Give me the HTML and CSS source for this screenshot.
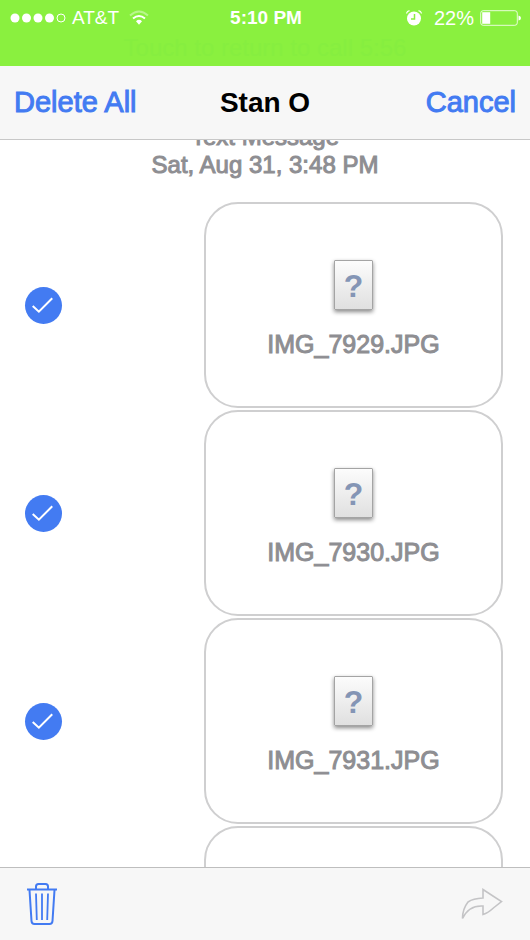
FILE: index.html
```html
<!DOCTYPE html>
<html lang="en">
<head>
<meta charset="utf-8">
<meta name="viewport" content="width=device-width, initial-scale=1">
<title>Stan O</title>
<link rel="stylesheet" href="styles.css">
</head>
<body>
<header class="status">
  <div class="status-row">
    <div class="status-left">
      <svg class="signal" width="56" height="10" viewBox="0 0 56 10" aria-hidden="true"><g fill="#fff"><circle cx="5" cy="5" r="4.5"/><circle cx="16.5" cy="5" r="4.5"/><circle cx="28" cy="5" r="4.5"/><circle cx="39.500" cy="5" r="4.500"/></g><circle cx="51" cy="5" r="4" fill="none" stroke="#fff"/></svg>
      <span>AT&amp;T</span>
      <svg class="wifi" width="20" height="16" viewBox="0 0 20 16" fill="none" stroke="#fff" stroke-width="2" aria-hidden="true"><path d="M1 5.500Q10-2.500 19 5.500" opacity=".4"/><path d="M4 8.500Q10 3.500 16 8.500"/><path d="M7 11.200Q10 8.500 13 11.200L10 14.800Z" fill="#fff" stroke="none"/></svg>
    </div>
    <span class="clock">5:10 PM</span>
    <div class="status-right">
      <svg width="16" height="16" viewBox="0 0 16 16" aria-hidden="true"><circle cx="8" cy="8.500" r="7" fill="#fff"/><path d="M.5 3.500Q1 1 3.500.7M12.500.7Q15 1 15.500 3.500" fill="none" stroke="#fff" stroke-width="1.200"/><path d="M8.500 4v5H5" fill="none" stroke="#8af03f" stroke-width="1.500"/></svg>
      <span>22%</span>
      <svg width="42" height="16" viewBox="0 0 42 16" aria-hidden="true"><rect x=".7" y=".7" width="36.600" height="14.600" rx="2.500" fill="none" stroke="#fff" opacity=".8"/><rect x="2.200" y="2.200" width="8" height="11.600" fill="#fff"/><path d="M38.500 5.500q2.500.5 2.500 2.500t-2.500 2.500z" fill="#fff"/></svg>
    </div>
  </div>
  <div class="call">Touch to return to call 5:56</div>
</header>
<nav class="bar">
  <button class="action" type="button">Delete All</button>
  <h1>Stan O</h1>
  <button class="action end" type="button">Cancel</button>
</nav>
<main class="thread">
  <p class="stamp">Text Message<br>Sat, Aug 31, 3:48 PM</p>
  <label class="message">
    <span class="tick"><input type="checkbox" checked><svg viewBox="0 0 36 36" aria-hidden="true"><path d="M7.500 18.500l6 5.500L26.500 11"/></svg></span>
    <span class="bubble"><span class="file">?</span><span>IMG_7929.JPG</span></span>
  </label>
  <label class="message">
    <span class="tick"><input type="checkbox" checked><svg viewBox="0 0 36 36" aria-hidden="true"><path d="M7.500 18.500l6 5.500L26.500 11"/></svg></span>
    <span class="bubble"><span class="file">?</span><span>IMG_7930.JPG</span></span>
  </label>
  <label class="message">
    <span class="tick"><input type="checkbox" checked><svg viewBox="0 0 36 36" aria-hidden="true"><path d="M7.500 18.500l6 5.500L26.500 11"/></svg></span>
    <span class="bubble"><span class="file">?</span><span>IMG_7931.JPG</span></span>
  </label>
  <div class="message"><span class="bubble"></span></div>
</main>
<footer class="tools">
  <button type="button" aria-label="Delete"><svg width="30" height="42" viewBox="0 0 30 42" fill="none" stroke="#437bf2" stroke-width="2" aria-hidden="true"><path d="M0 6.500H30"/><path d="M9 6V3.500Q9 1 11.500 1H18.500Q21 1 21 3.500V6"/><path d="M2.500 7L4.500 38Q4.700 41 7.500 41H22.500Q25.300 41 25.500 38L27.500 7"/><path d="M9 10.500L9.800 37M15 10.500V37M21 10.500L20.200 37" stroke-width="1.800"/></svg></button>
  <button type="button" aria-label="Forward" disabled><svg width="42" height="32" viewBox="0 0 42 32" fill="none" stroke="#c4c4c6" stroke-width="1.600" aria-hidden="true"><path d="M22 1.500L40.500 13.500L33 19.500Q27 25 22 26.500V18Q8 17 1.500 30.500Q1.500 21 7 14Q12 10.500 22 10Z"/></svg></button>
</footer>
</body>
</html>
```
FILE: styles.css
```css
* {
  box-sizing: border-box;
}

body {
  margin: 0;
  height: 100vh;
  display: flex;
  flex-direction: column;
  background: #fff;
  font-family: "Liberation Sans", Arial, sans-serif;
  overflow: hidden;
}

button {
  border: 0;
  padding: 0;
  background: none;
  font: inherit;
}

svg {
  display: block;
}

.status {
  height: 66px;
  background: #8af03f;
  color: #fff;
  font-size: 19px;
}

.status-row {
  display: grid;
  grid-template-columns: 1fr auto 1fr;
  align-items: center;
  height: 36px;
  padding: 0 8px 0 10px;
}

.status-left,
.status-right {
  display: flex;
  align-items: center;
  gap: 6px;
}

.wifi {
  margin-left: 4px;
}

.status-right {
  justify-content: flex-end;
  font-size: 20px;
}

.status-right span {
  margin-left: 6px;
}

.clock {
  font-weight: bold;
}

.call {
  color: #86ee40;
  font-size: 24px;
  line-height: 24px;
  text-align: center;
}

.bar {
  display: grid;
  grid-template-columns: 1fr auto 1fr;
  align-items: center;
  height: 74px;
  padding: 0 14px;
  background: #f7f7f7;
  border-bottom: 1px solid #c8c8c8;
  font-size: 29px;
}

.bar h1 {
  margin: 0;
  font-size: 28px;
  color: #000;
}

.action {
  color: #437bf2;
  text-align: left;
  -webkit-text-stroke: 1px #437bf2;
}

.end {
  text-align: right;
}

.thread {
  flex: 1;
  min-height: 0;
  display: flex;
  flex-direction: column;
  gap: 2px;
  overflow: hidden;
  color: #8e8e92;
  -webkit-text-stroke: 1px #8e8e92;
}

.stamp {
  flex: none;
  margin: -17px 0 21px;
  font-size: 24px;
  line-height: 28px;
  text-align: center;
}

.message {
  flex: none;
  display: flex;
  align-items: center;
  justify-content: space-between;
  padding: 0 27px 0 25px;
}

.tick {
  display: grid;
  width: 37px;
  height: 37px;
}

.tick input,
.tick svg {
  grid-area: 1 / 1;
  width: 100%;
  height: 100%;
  margin: 0;
}

.tick input {
  appearance: none;
  border-radius: 50%;
  background: #437bf2;
}

.tick path {
  fill: none;
  stroke: #fff;
  stroke-width: 2;
}

.bubble {
  display: flex;
  flex-direction: column;
  align-items: center;
  gap: 19px;
  width: 299px;
  height: 206px;
  margin-left: auto;
  padding-top: 56px;
  border: 2px solid #cfcfd0;
  border-radius: 34px;
  font-size: 25px;
  line-height: 30px;
}

.file {
  width: 39px;
  height: 50px;
  border: 1px solid #a4a4a4;
  border-radius: 1px;
  background: linear-gradient(#fcfcfc, #e0e0e0);
  box-shadow: 0 2px 4px #0007;
  color: #8495b5;
  font-size: 32px;
  font-weight: bold;
  line-height: 50px;
  text-align: center;
  -webkit-text-stroke: 0;
}

.tools {
  display: flex;
  align-items: center;
  justify-content: space-between;
  height: 73px;
  padding: 0 27px;
  background: #f7f7f7;
  border-top: 1px solid #bebebe;
}
```
